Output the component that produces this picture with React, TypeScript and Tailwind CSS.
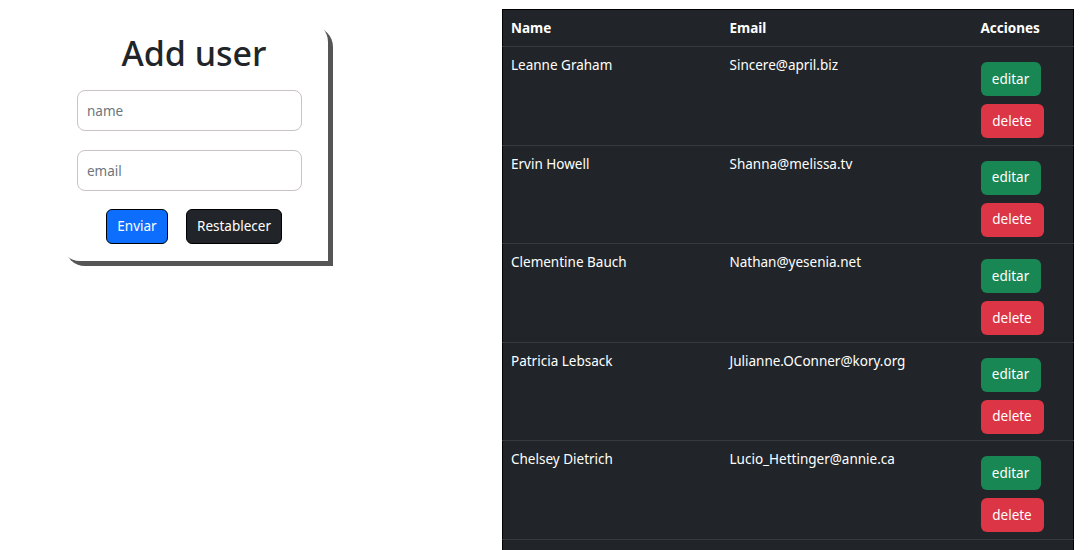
import React from "react";

const users = [
  { name: "Leanne Graham", email: "Sincere@april.biz" },
  { name: "Ervin Howell", email: "Shanna@melissa.tv" },
  { name: "Clementine Bauch", email: "Nathan@yesenia.net" },
  { name: "Patricia Lebsack", email: "Julianne.OConner@kory.org" },
  { name: "Chelsey Dietrich", email: "Lucio_Hettinger@annie.ca" },
];

export default function App() {
  return (
    <div
      className="flex h-[550px] w-[1092px] overflow-hidden bg-white text-[#212529]"
      style={{ fontFamily: '"Noto Sans", "Open Sans", sans-serif' }}
    >
      <div className="w-[502px] shrink-0 pl-[60px] pt-[22px]">
        <div className="flex w-[268px] flex-col rounded-tr-[20px] rounded-bl-[20px] bg-white pb-[17px] pl-[17px] pr-[17px] pt-[11px] shadow-[5px_5px_0_#555]">
          <h1 className="text-center text-[34px] font-medium leading-[41px]">Add user</h1>
          <input
            placeholder="name"
            className="mt-[16px] h-[41px] w-[225px] rounded-[8px] border border-[#c9c3c6] px-[9px] text-[13.5px] outline-none placeholder:text-[#6c757d]"
          />
          <input
            placeholder="email"
            className="mt-[19px] h-[41px] w-[225px] rounded-[8px] border border-[#c9c3c6] px-[9px] text-[13.5px] outline-none placeholder:text-[#6c757d]"
          />
          <div className="mt-[18px] flex justify-center gap-[18px]">
            <button className="h-[35px] w-[62px] rounded-[6px] border border-black bg-[#0d6efd] text-[13.5px] text-white">
              Enviar
            </button>
            <button className="h-[35px] w-[96px] rounded-[6px] border border-black bg-[#212529] text-[13.5px] text-white">
              Restablecer
            </button>
          </div>
        </div>
      </div>
      <div className="mt-[9px] w-[572px] shrink-0">
        <table className="w-full border-collapse border border-black bg-[#212529] text-[13.5px] leading-[21px] text-white">
          <thead>
            <tr className="border-b border-[#373b3e]">
              <th className="w-[219px] px-[8px] pb-[7px] pt-[8px] text-left font-bold">Name</th>
              <th className="w-[251px] px-[8px] pb-[7px] pt-[8px] text-left font-bold">Email</th>
              <th className="px-[8px] pb-[7px] pt-[8px] text-left font-bold">Acciones</th>
            </tr>
          </thead>
          <tbody>
            {users.map((u) => (
              <tr key={u.name} className="border-b border-[#373b3e] align-top">
                <td className="px-[8px] pb-[6.5px] pt-[8px]">{u.name}</td>
                <td className="px-[8px] pb-[6.5px] pt-[8px]">{u.email}</td>
                <td className="px-[8px] pb-[6.5px] pt-[8px]">
                  <div className="flex flex-col items-start gap-[8px] pt-[7px]">
                    <button className="h-[34px] w-[60px] rounded-[6px] bg-[#198754] text-[13.5px] text-white">
                      editar
                    </button>
                    <button className="h-[34px] w-[63px] rounded-[6px] bg-[#dc3545] text-[13.5px] text-white">
                      delete
                    </button>
                  </div>
                </td>
              </tr>
            ))}
            <tr className="h-[30px]">
              <td />
              <td />
              <td />
            </tr>
          </tbody>
        </table>
      </div>
    </div>
  );
}
